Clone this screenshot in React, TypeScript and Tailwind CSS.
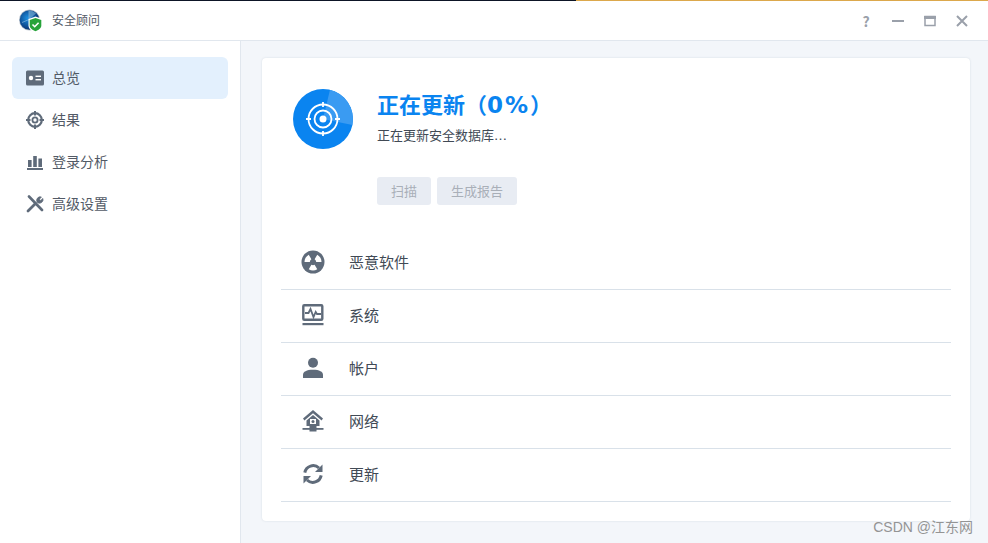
function OverviewIcon() {
  return (
    <svg width="18" height="16" viewBox="0 0 18 16" fill="none">
      <rect y="0.5" width="18" height="15" rx="1.5" fill="#5f6b7a" />
      <circle cx="5" cy="8" r="2.2" fill="#fff" />
      <rect x="9.5" y="5.6" width="5.5" height="1.4" fill="#fff" />
      <rect x="9.5" y="9" width="5.5" height="1.4" fill="#fff" />
    </svg>
  );
}

function ResultIcon() {
  return (
    <svg width="18" height="18" viewBox="0 0 18 18" fill="none" stroke="#5f6b7a">
      <circle cx="9" cy="9" r="6.8" strokeWidth="2.2" />
      <circle cx="9" cy="9" r="2.6" strokeWidth="1.8" />
      <path d="M9 0v4.500M9 13.500V18M0 9h4.500M13.500 9H18" strokeWidth="2" />
    </svg>
  );
}

function ChartIcon() {
  return (
    <svg width="16" height="16" viewBox="0 0 16 16" fill="#5f6b7a">
      <rect x="1" y="6" width="3.6" height="7" />
      <rect x="6.2" y="2" width="3.6" height="11" />
      <rect x="11.4" y="4.5" width="3.6" height="8.5" />
      <rect x="0" y="14" width="16" height="2" />
    </svg>
  );
}

function ToolsIcon() {
  return (
    <svg width="18" height="18" viewBox="0 0 18 18" fill="none" stroke="#5f6b7a" strokeLinecap="round">
      <path d="M3 1.5 16 15" strokeWidth="2.6" />
      <path d="M2 16l7.5-7.5" strokeWidth="2.8" />
      <path d="M11 7a3.6 3.6 0 0 1 4.4-5l-2 2.2 1.3 1.3 2.2-2A3.6 3.6 0 0 1 12.4 8z" fill="#5f6b7a" strokeWidth="0.8" />
    </svg>
  );
}

function MalwareIcon() {
  return (
    <svg width="24" height="24" viewBox="0 0 24 24">
      <circle cx="12" cy="12" r="11.500" fill="#5f6b7a" />
      <path
        d="M16.25 4.64A8.5 8.5 0 0 1 20.5 12H15.2A3.2 3.2 0 0 0 13.6 9.23zM7.75 4.64A8.5 8.5 0 0 0 3.5 12H8.8A3.2 3.2 0 0 1 10.4 9.23zM16.25 19.36A8.5 8.5 0 0 1 7.75 19.36L10.4 14.77A3.2 3.2 0 0 0 13.6 14.77z"
        fill="#fff"
      />
    </svg>
  );
}

function SystemIcon() {
  return (
    <svg width="22" height="22" viewBox="0 0 22 22" fill="none" stroke="#5f6b7a">
      <rect x="1.300" y="1.300" width="19" height="14.400" rx="1" strokeWidth="2.400" />
      <path d="M3 9h3.500l2-4 3 8 2.200-5 1.300 2H19" strokeWidth="1.800" />
      <rect x="0.500" y="19" width="21" height="2.200" fill="#5f6b7a" stroke="none" />
    </svg>
  );
}

function UserIcon() {
  return (
    <svg width="22" height="22" viewBox="0 0 22 22" fill="#5f6b7a">
      <circle cx="11" cy="5.800" r="5" />
      <path d="M1 21v-3.200c0-3 3.500-5 10-5s10 2 10 5V21z" />
    </svg>
  );
}

function NetworkIcon() {
  return (
    <svg width="22" height="22" viewBox="0 0 22 22" fill="#5f6b7a">
      <path d="M11 0 21 8.500 19.600 10.500 11 3.200 2.400 10.500 1 8.500z" />
      <path fillRule="evenodd" d="M11 5 17.500 10.500V16H4.500V10.500zM8 9v5h6V9z" />
      <circle cx="11" cy="11.500" r="1.500" />
      <rect x="0.500" y="18" width="21" height="1.800" />
      <rect x="7.500" y="16" width="7" height="5.500" />
    </svg>
  );
}

function UpdateIcon() {
  return (
    <svg width="20" height="20" viewBox="0 0 20 20" fill="none" stroke="#5f6b7a" strokeWidth="3">
      <path d="M1.800 8.600A8.500 8.500 0 0 1 16 4" />
      <path d="M18.200 11.400A8.500 8.500 0 0 1 4 16" />
      <path d="M19.500 0.500v7.500h-7.500z" fill="#5f6b7a" stroke="none" />
      <path d="M0.500 19.500v-7.500h7.500z" fill="#5f6b7a" stroke="none" />
    </svg>
  );
}

function AppLogo() {
  return (
    <svg width="24" height="24" viewBox="0 0 24 24">
      <defs>
        <radialGradient id="globe" cx="0.4" cy="0.4" r="0.7">
          <stop offset="0" stopColor="#1c8fe0" />
          <stop offset="0.7" stopColor="#0d4488" />
          <stop offset="1" stopColor="#0a2347" />
        </radialGradient>
      </defs>
      <circle cx="10.500" cy="11" r="10.500" fill="#b9c2cc" />
      <circle cx="10.500" cy="11" r="9.800" fill="url(#globe)" />
      <path d="M10 1.500v9l-7 3" stroke="#9cc4e4" strokeWidth="0.600" fill="none" />
      <path d="M10 1.500a10 10 0 0 1 7 3l-7 6z" fill="#6fa7cf" opacity="0.7" />
      <path d="M16.500 7.500 23.500 10v6.500c0 3.500-3.500 6-7 7-3.500-1-7-3.500-7-7V10z" fill="#fff" />
      <path d="M16.500 9 22.300 11v5.500c0 2.800-3 4.800-5.800 5.700-2.800-.9-5.800-2.900-5.800-5.700V11z" fill="#27a33a" />
      <path d="M13.500 15.500l2.200 2.200 3.900-4" stroke="#fff" strokeWidth="1.600" fill="none" />
    </svg>
  );
}

function HeroIcon() {
  return (
    <div className="flex h-[60px] w-[60px] shrink-0 items-center justify-center overflow-hidden rounded-full bg-[#0a84f0]">
      <svg width="60" height="60" viewBox="0 0 60 60" fill="none" stroke="#fff">
        <path d="M30 30 37 0.800A30 30 0 0 1 59.500 36z" fill="#3a9bf2" stroke="none" />
        <circle cx="30" cy="30" r="14.500" strokeWidth="1.800" />
        <circle cx="30" cy="30" r="8.500" strokeWidth="1.800" />
        <circle cx="30" cy="30" r="3.500" fill="#fff" stroke="none" />
        <path d="M30 13v5M30 42v5M13 30h5M42 30h5" strokeWidth="1.800" />
      </svg>
    </div>
  );
}

const NAV = [
  { label: "总览", icon: <OverviewIcon />, active: true },
  { label: "结果", icon: <ResultIcon />, active: false },
  { label: "登录分析", icon: <ChartIcon />, active: false },
  { label: "高级设置", icon: <ToolsIcon />, active: false },
];

const ROWS = [
  { label: "恶意软件", icon: <MalwareIcon /> },
  { label: "系统", icon: <SystemIcon /> },
  { label: "帐户", icon: <UserIcon /> },
  { label: "网络", icon: <NetworkIcon /> },
  { label: "更新", icon: <UpdateIcon /> },
];

export default function App() {
  return (
    <div className="relative flex h-[543px] w-[988px] flex-col overflow-hidden bg-white font-['Noto_Sans_CJK_SC','Noto_Sans',sans-serif]">
      {/* sliver of the desktop behind the window */}
      <div className="flex h-px shrink-0">
        <div className="w-[576px] bg-[#0d1526]" />
        <div className="flex-1 bg-[#dca84c]" />
      </div>

      <header className="flex h-10 shrink-0 items-center border-b border-[#e1e7ee] pl-[19px] pr-[19px]">
        <span className="mt-px flex">
          <AppLogo />
        </span>
        <span className="ml-[9px] pb-0.5 text-xs text-[#525a66]">安全顾问</span>
        <div className="ml-auto flex items-center gap-[18px] text-[#9aa0aa]">
          <span className="w-3.5 text-center text-sm font-bold leading-none">?</span>
          <svg width="14" height="14" viewBox="0 0 14 14" fill="#9aa0aa">
            <rect x="1" y="6" width="12" height="2" />
          </svg>
          <svg width="14" height="14" viewBox="0 0 14 14" fill="none" stroke="#9aa0aa">
            <rect x="2" y="2.500" width="10" height="9" strokeWidth="1.500" />
            <rect x="1" y="2" width="12" height="3" fill="#9aa0aa" stroke="none" />
          </svg>
          <svg width="14" height="14" viewBox="0 0 14 14" fill="none" stroke="#9aa0aa" strokeWidth="2">
            <path d="M2 2l10 10M12 2 2 12" />
          </svg>
        </div>
      </header>

      <div className="flex min-h-0 flex-1">
        <aside className="flex w-[241px] shrink-0 flex-col border-r border-[#e1e7ee] px-3 pt-4">
          {NAV.map((n) => (
            <div
              key={n.label}
              className={`flex h-[42px] items-center rounded-md pl-[14px] text-sm text-[#525a66] ${n.active ? "bg-[#e3f0fd]" : ""}`}
            >
              <span className="flex w-[18px] justify-center">{n.icon}</span>
              <span className="ml-2 pb-0.5">{n.label}</span>
            </div>
          ))}
        </aside>

        <main className="min-w-0 flex-1 bg-[#f3f6fa] pl-[21px] pr-[18px] pt-[17px]">
          <div className="h-[463px] rounded bg-white shadow-[0_0_2px_rgba(120,140,160,0.25)]">
            <div className="flex pl-[31px] pt-[31px]">
              <HeroIcon />
              <div className="ml-6">
                <h1 className="-mt-px h-[30px] text-[22px] font-bold leading-[30px] text-[#0a84f0]">
                  正在更新（
                  <span className="font-['DejaVu_Sans',sans-serif] text-[23px] leading-none tracking-[2px]">0%</span>
                  ）
                </h1>
                <p className="mt-[7px] text-[13px] leading-5 text-[#414a55]">
                  正在更新安全数据库<span className="font-['DejaVu_Sans',sans-serif]">…</span>
                </p>
              </div>
            </div>
            <div className="ml-[115px] mt-7 flex gap-1.5">
              <button type="button" className="h-7 rounded-[3px] bg-[#e8ecf3] px-[14px] text-[13px] text-[#a9afb8]">扫描</button>
              <button type="button" className="h-7 rounded-[3px] bg-[#e8ecf3] px-[14px] text-[13px] text-[#a9afb8]">生成报告</button>
            </div>
            <div className="mx-[19px] mt-8">
              {ROWS.map((r) => (
                <div key={r.label} className="flex h-[53px] items-center border-b border-[#d9e1e9] pb-0.5">
                  <span className="ml-5 flex w-6 justify-center">{r.icon}</span>
                  <span className="ml-6 text-[15px] text-[#414a55]">{r.label}</span>
                </div>
              ))}
            </div>
          </div>
        </main>
      </div>

      <span className="absolute bottom-[6px] right-[15px] font-['Liberation_Sans','Noto_Sans_CJK_SC',sans-serif] text-sm text-[#949494]">CSDN @江东网</span>
    </div>
  );
}
